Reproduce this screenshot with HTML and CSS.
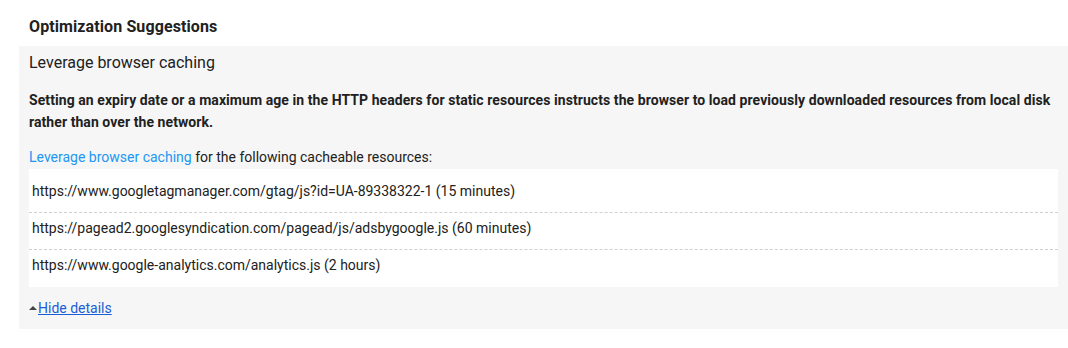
FILE: index.html
```html
<!DOCTYPE html>
<html>
<head>
  <title>Optimization Suggestions</title>
  <link rel="stylesheet" href="styles.css">
</head>
<body>

<h3 class="section-title">Optimization Suggestions</h3>

<!-- SUGGESTION BOX -->
<div class="suggestion">
  <div class="suggestion-title">Leverage browser caching</div>
  <p class="suggestion-desc">Setting an expiry date or a maximum age in the HTTP headers for static resources instructs the browser to load previously downloaded resources from local disk rather than over the network.</p>
  <div class="suggestion-intro"><a href="#" class="doc-link">Leverage browser caching</a> for the following cacheable resources:</div>
  <div class="resource-list">
    <div class="resource-item">https://www.googletagmanager.com/gtag/js?id=UA-89338322-1 (15 minutes)</div>
    <div class="resource-item">https://pagead2.googlesyndication.com/pagead/js/adsbygoogle.js (60 minutes)</div>
    <div class="resource-item">https://www.google-analytics.com/analytics.js (2 hours)</div>
  </div>
  <div class="toggle"><span class="toggle-arrow"></span><a href="#" class="toggle-link">Hide details</a></div>
</div>

</body>
</html>
```

FILE: styles.css
```css
body {
  font-family: 'Roboto', 'Liberation Sans', sans-serif;
  color: #212121;
  margin: 0;
  padding: 15px 0 0 19px;
}
.section-title {
  font-size: 16px;
  font-weight: bold;
  line-height: 24px;
  letter-spacing: 0.1px;
  margin: 0 0 7px;
  padding-left: 10px;
}
.suggestion {
  background: #f6f6f6;
  padding: 5px 10px 11px;
}
.suggestion-title {
  font-size: 16px;
  line-height: 24px;
}
.suggestion-desc {
  font-size: 14px;
  font-weight: bold;
  line-height: 22px;
  letter-spacing: 0.07px;
  margin: 14px 0 0;
}
.suggestion-intro {
  font-size: 14px;
  line-height: 20px;
  margin-top: 14px;
}
.doc-link {
  color: #2196f3;
  text-decoration: none;
}
.resource-list {
  background: #fff;
  margin-top: 2px;
  padding: 7px 0 1px;
}
.resource-item {
  font-size: 14px;
  line-height: 20px;
  padding: 5px 3px 11px;
  border-bottom: 1px dashed #d0d0d0;
}
.resource-item:last-child {
  border-bottom: none;
}
.toggle {
  font-size: 14px;
  line-height: 20px;
  margin-top: 11px;
}
.toggle-arrow {
  display: inline-block;
  width: 0;
  height: 0;
  border-left: 4px solid transparent;
  border-right: 4px solid transparent;
  border-bottom: 4px solid #444;
  margin: 0 1px 3px 0;
  vertical-align: middle;
}
.toggle-link {
  color: #1a5ed6;
}
```
